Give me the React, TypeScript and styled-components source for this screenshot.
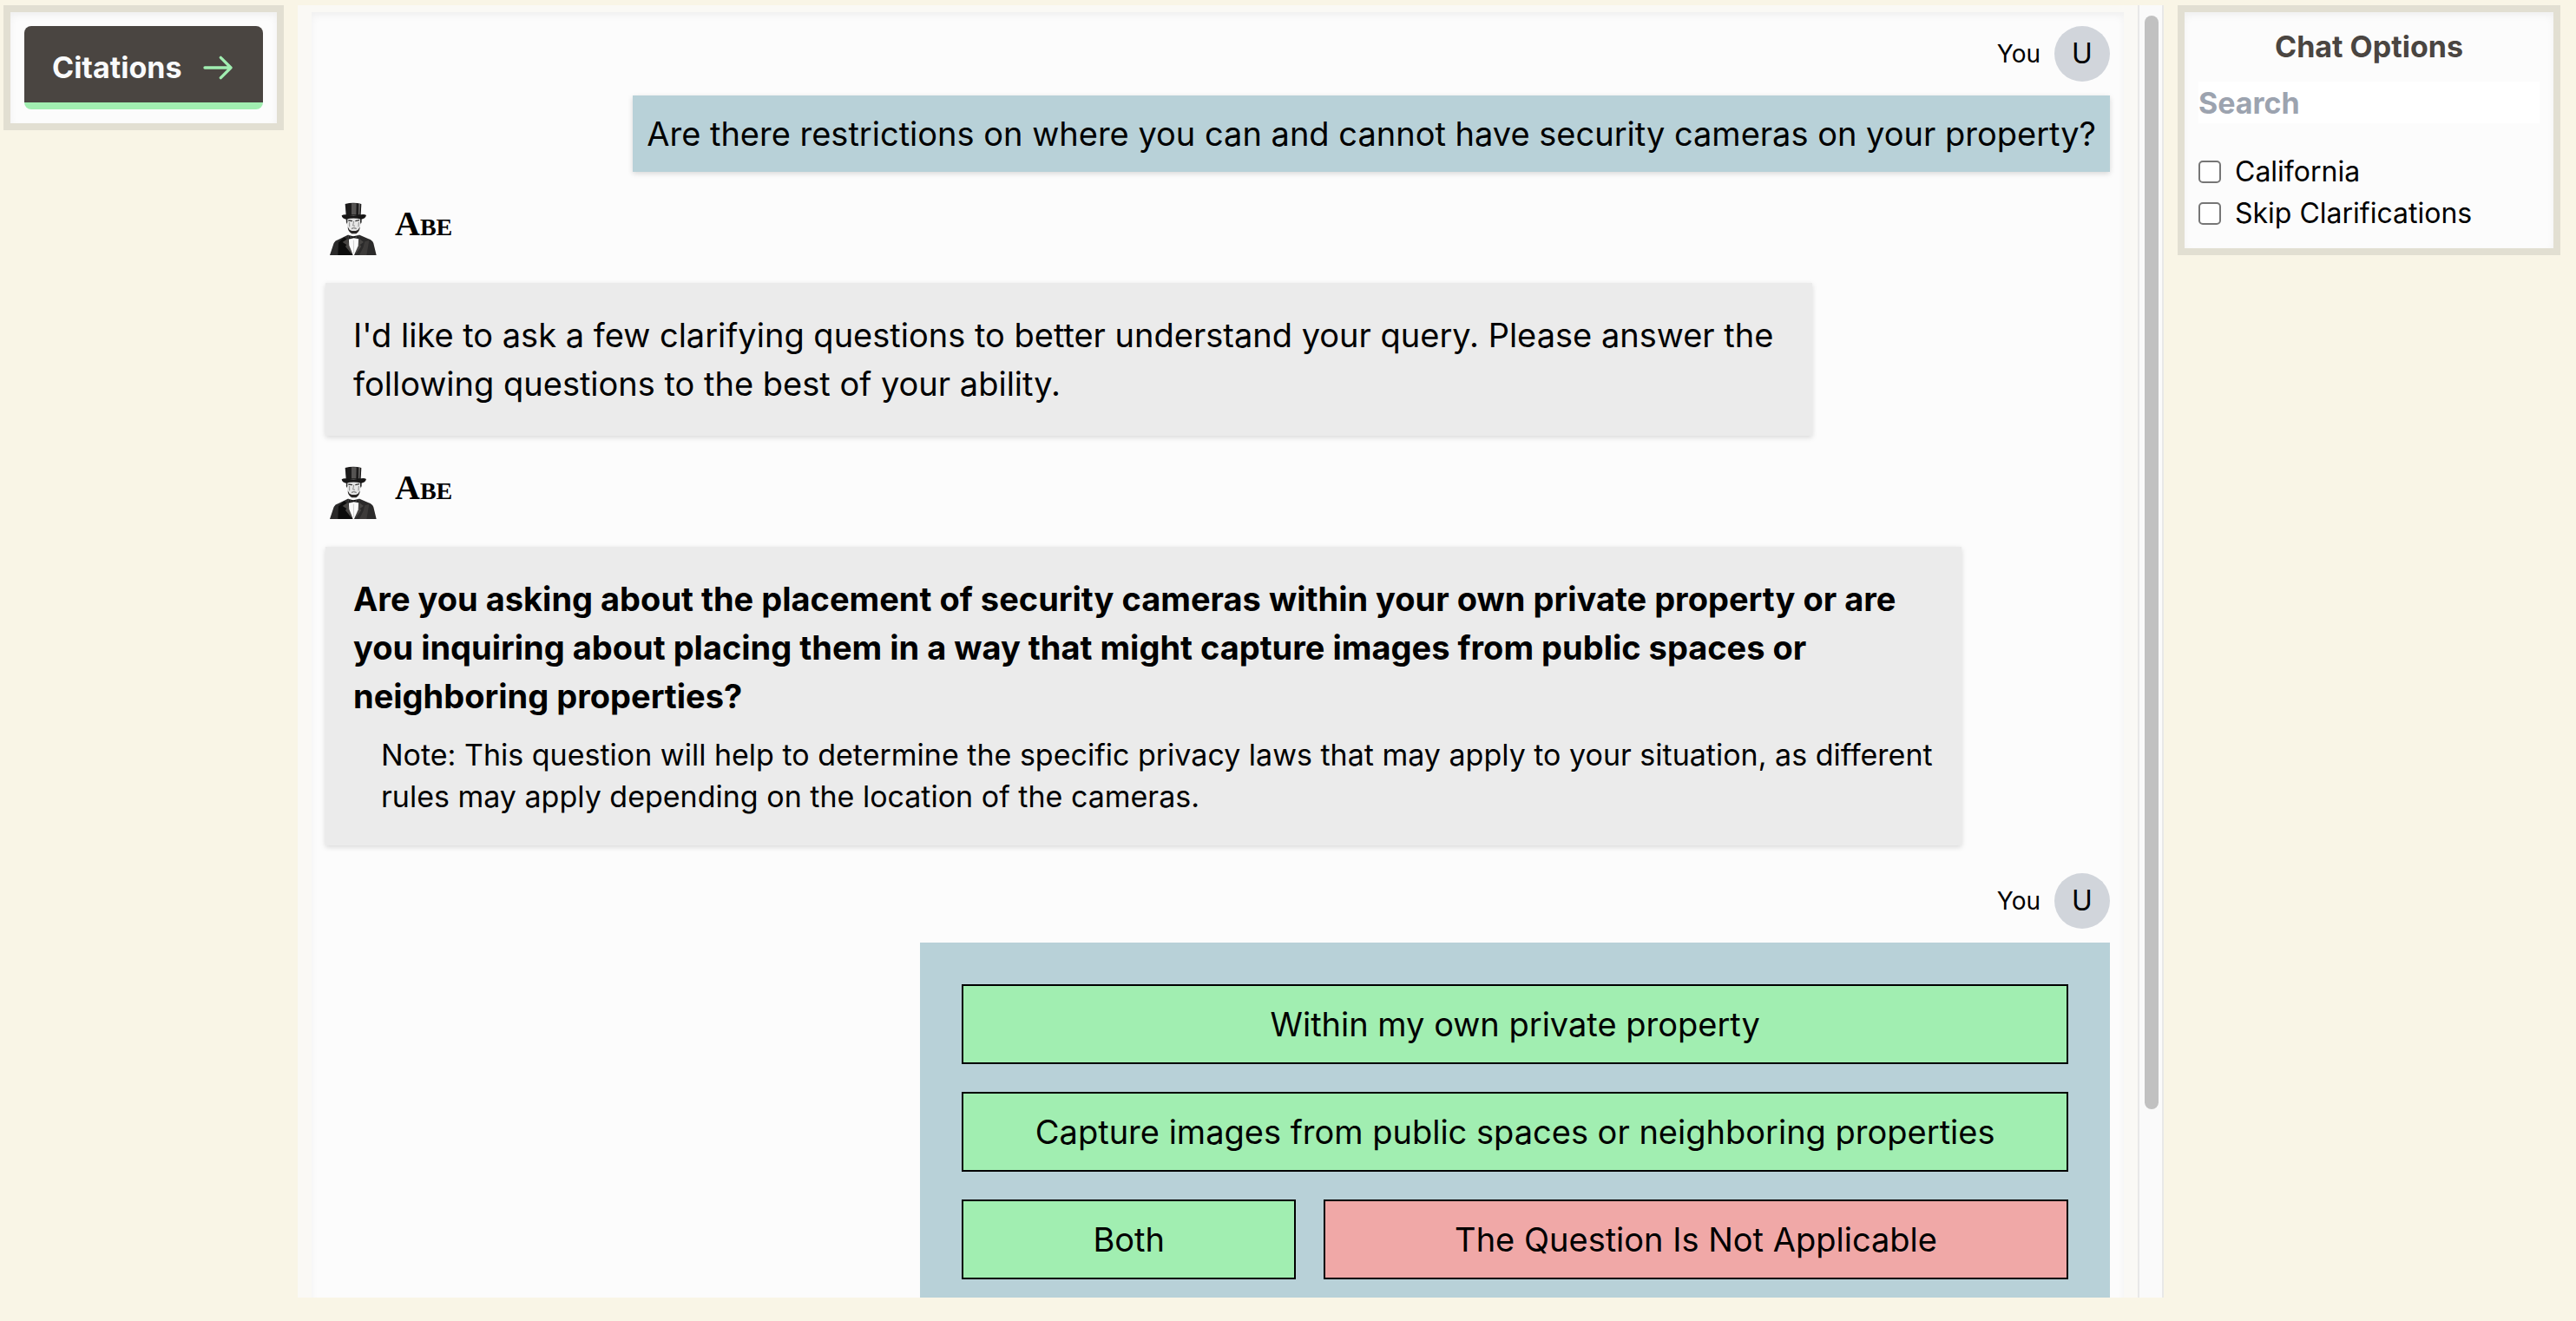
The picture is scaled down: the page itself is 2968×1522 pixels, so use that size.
import React, { useState } from "react";
import styled, { createGlobalStyle } from "styled-components";

const color = {
  page: "#f9f5e6",
  frame: "#e2dfd2",
  surface: "#fcfcfc",
  ink: "#000000",
  charcoal: "#4a4541",
  user: "#b8d1d8",
  bot: "#ebebeb",
  green: "#a1eeb1",
  red: "#f0a8a7",
};

const innerShadow = "inset 0 4px 8px rgba(0, 0, 0, 0.05)";

const GlobalStyle = createGlobalStyle`
  *, *::before, *::after { box-sizing: border-box; }
  body {
    margin: 0;
    background: ${color.page};
    color: ${color.ink};
    font-family: Inter, "Liberation Sans", sans-serif;
  }
  button, input { font: inherit; color: inherit; }
  p, h2 { margin: 0; }
`;

const Page = styled.div`
  display: grid;
  grid-template-columns: 323px minmax(0, 1fr) 441px;
  gap: 16px;
  align-items: start;
  height: 100vh;
  padding: 6px 18px 27px 4px;
`;

const Panel = styled.aside`
  padding: 16px;
  border: 8px solid ${color.frame};
  background: ${color.surface};
  box-shadow: ${innerShadow};
`;

const CitationsButton = styled.button`
  display: flex;
  align-items: center;
  justify-content: space-between;
  width: 100%;
  height: 96px;
  padding: 0 32px;
  border: 0;
  border-radius: 8px;
  background: linear-gradient(to top, ${color.green} 8px, ${color.charcoal} 8px);
  color: #f9fafb;
  font-size: 34px;
  font-weight: 700;
  line-height: 48px;
`;

const ArrowIcon = styled.svg`
  width: 40px;
  height: 40px;
  fill: none;
  stroke: ${color.green};
  stroke-width: 2;
  stroke-linecap: round;
  stroke-linejoin: round;
`;

const ChatFrame = styled.main`
  display: flex;
  height: 100%;
  min-height: 0;
  background: #faf9f5;
`;

const ChatScroll = styled.div`
  flex: 1;
  min-width: 0;
  overflow: hidden;
  padding: 8px 16px 0;
`;

const Thread = styled.div`
  display: flex;
  flex-direction: column;
  gap: 32px;
  padding: 16px;
  background: ${color.surface};
  box-shadow: ${innerShadow};
`;

const ScrollTrack = styled.div`
  width: 30px;
  padding: 12px 4px 12px 6px;
  border: solid #e8e8e8;
  border-width: 0 2px;
  background: #fafafa;
`;

const ScrollThumb = styled.div`
  width: 16px;
  height: 86%;
  border-radius: 8px;
  background: #c1c1c1;
`;

const Message = styled.article<{ $from: "user" | "bot" }>`
  display: flex;
  flex-direction: column;
  align-items: ${(p) => (p.$from === "user" ? "flex-end" : "flex-start")};
  gap: ${(p) => (p.$from === "user" ? "16px" : "32px")};
`;

const Author = styled.header`
  display: flex;
  align-items: center;
  gap: 16px;
  height: 64px;
  font-size: 28px;
  line-height: 40px;
`;

const Avatar = styled.span`
  display: grid;
  place-items: center;
  width: 64px;
  height: 64px;
  border-radius: 50%;
  background: #d1d5db;
  font-size: 32px;
`;

const Portrait = styled.svg`
  width: 64px;
  height: 64px;
`;

const BotName = styled.span`
  padding-bottom: 8px;
  font-family: "Liberation Serif", serif;
  font-size: 40px;
  font-weight: 700;
  font-variant: small-caps;
`;

const Bubble = styled.div<{ $from: "user" | "bot"; $width?: string }>`
  width: ${(p) => p.$width ?? "auto"};
  padding: ${(p) => (p.$from === "user" ? "16px" : "32px")};
  background: ${(p) => (p.$from === "user" ? color.user : color.bot)};
  box-shadow: 0 2px 6px rgba(0, 0, 0, 0.15);
  font-size: 38px;
  line-height: 56px;
`;

const Question = styled.p`
  font-weight: 700;
`;

const Note = styled.p`
  margin-top: 16px;
  padding-left: 32px;
  font-size: 34px;
  line-height: 48px;
`;

const Choices = styled.div`
  display: flex;
  flex-wrap: wrap;
  gap: 32px;
  width: calc(100% * 2 / 3);
  padding: 48px;
  background: ${color.user};
`;

const Choice = styled.button<{ $tone: "green" | "red" }>`
  flex: 1 1 auto;
  padding: 16px 32px;
  border: 2px solid ${color.ink};
  background: ${(p) => color[p.$tone]};
  font-size: 38px;
  line-height: 56px;
`;

const PanelTitle = styled.h2`
  color: ${color.charcoal};
  font-size: 34px;
  font-weight: 700;
  line-height: 48px;
  text-align: center;
`;

const SearchBox = styled.input`
  display: block;
  width: 100%;
  height: 48px;
  margin: 16px 0 32px;
  padding: 0;
  border: 0;
  background: #ffffff;
  font-size: 34px;
  font-weight: 700;
  &::placeholder {
    color: #9ca3af;
  }
`;

const Option = styled.label`
  display: flex;
  align-items: center;
  gap: 16px;
  font-size: 32px;
  line-height: 48px;
`;

const Tick = styled.input`
  appearance: none;
  width: 26px;
  height: 26px;
  margin: 0;
  border: 2px solid #767676;
  border-radius: 5px;
  background: #ffffff;
  &:checked {
    background: ${color.charcoal};
  }
`;

function AbePortrait() {
  return (
    <Portrait viewBox="15 30 192 192" aria-hidden="true">
      <path d="M30 222 L44 180 Q48 171 60 168 L92 152 L133 152 L164 166 Q177 170 181 181 L191 222 Z" fill="#2b2a2a" />
      <path d="M58 222 L60 178 L80 160 L92 170 L108 222 Z" fill="#0c0c0c" />
      <path d="M74 177 L92 165 L106 219 L84 192 L88 186 Z M147 177 L132 165 L118 219 L139 192 L134 186 Z" fill="#484644" />
      <path d="M151 175 L166 171 L157 222 L132 222 L145 196 Z" fill="#3d3b3a" />
      <path d="M98 140 L128 140 L130 158 L128 190 L114 222 L110 222 L97 188 L95 158 Z" fill="#fbfbfb" />
      <path d="M112 170 L113 216" stroke="#bdbdbd" strokeWidth="2" />
      <path d="M95 153 L111 157 L130 153 L131 166 L113 163 L94 167 Z" fill="#151515" />
      <path d="M99 159 L106 160 M118 160 L126 159" stroke="#777" strokeWidth="2" />
      <path d="M89 94 L137 94 Q142 109 135 122 Q132 138 119 146 L107 146 Q93 138 91 123 Q85 108 89 94 Z" fill="#e6e6e6" />
      <path d="M87 95 L91 96 L91 108 L89 114 Q85 108 87 95 Z M139 95 L135 96 L135 108 L137 114 Q142 108 139 95 Z" fill="#2b2b2b" />
      <path d="M92 124 L98 134 L106 138 L120 138 L128 134 L134 124 Q134 140 121 148 L106 148 Q92 140 92 124 Z" fill="#292625" />
      <path d="M105 130 L113 128 L122 130" fill="none" stroke="#5a5a5a" strokeWidth="3" />
      <path d="M94 102 L108 104 M118 104 L132 101" stroke="#333" strokeWidth="4" />
      <path d="M113 104 L110 120 L117 121 M98 108 L98 124 M130 108 L129 124" fill="none" stroke="#8a8a8a" strokeWidth="3" />
      <path d="M83 45 Q111 38 139 45 L137 84 L86 84 Z" fill="#1c1b1b" />
      <path d="M105 43 L122 43 L121 82 L105 82 Z" fill="#555352" />
      <path d="M130 44 L135 45 L133 82 L129 82 Z" fill="#6d6b6a" />
      <path d="M71 85 Q77 81 85 82 Q112 88 138 82 Q150 80 156 84 Q153 96 139 98 Q112 91 86 98 Q73 96 71 85 Z" fill="#171616" />
    </Portrait>
  );
}

function UserHeader() {
  return (
    <Author>
      You <Avatar>U</Avatar>
    </Author>
  );
}

function AbeHeader() {
  return (
    <Author>
      <AbePortrait />
      <BotName>Abe</BotName>
    </Author>
  );
}

const filters = ["California", "Skip Clarifications"];

export default function App() {
  const [query, setQuery] = useState("");

  return (
    <>
      <GlobalStyle />
      <Page>
        <Panel>
          <CitationsButton type="button">
            Citations
            <ArrowIcon viewBox="0 0 24 24" aria-hidden="true">
              <path d="M14 5l7 7m0 0l-7 7m7-7H3" />
            </ArrowIcon>
          </CitationsButton>
        </Panel>

        <ChatFrame>
          <ChatScroll>
            <Thread>
              <Message $from="user">
                <UserHeader />
                <Bubble $from="user">
                  Are there restrictions on where you can and cannot have security cameras on your property?
                </Bubble>
              </Message>

              <Message $from="bot">
                <AbeHeader />
                <Bubble $from="bot" $width="calc(100% * 5 / 6)">
                  I'd like to ask a few clarifying questions to better understand your query. Please answer the
                  following questions to the best of your ability.
                </Bubble>
              </Message>

              <Message $from="bot">
                <AbeHeader />
                <Bubble $from="bot" $width="calc(100% * 11 / 12)">
                  <Question>
                    Are you asking about the placement of security cameras within your own private property or are you
                    inquiring about placing them in a way that might capture images from public spaces or neighboring
                    properties?
                  </Question>
                  <Note>
                    Note: This question will help to determine the specific privacy laws that may apply to your
                    situation, as different rules may apply depending on the location of the cameras.
                  </Note>
                </Bubble>
              </Message>

              <Message $from="user">
                <UserHeader />
                <Choices>
                  <Choice type="button" $tone="green">Within my own private property</Choice>
                  <Choice type="button" $tone="green">
                    Capture images from public spaces or neighboring properties
                  </Choice>
                  <Choice type="button" $tone="green">Both</Choice>
                  <Choice type="button" $tone="red">The Question Is Not Applicable</Choice>
                </Choices>
              </Message>
            </Thread>
          </ChatScroll>
          <ScrollTrack>
            <ScrollThumb />
          </ScrollTrack>
        </ChatFrame>

        <Panel>
          <PanelTitle>Chat Options</PanelTitle>
          <SearchBox
            type="search"
            placeholder="Search"
            aria-label="Search"
            value={query}
            onChange={(e) => setQuery(e.target.value)}
          />
          {filters.map((name) => (
            <Option key={name}>
              <Tick type="checkbox" />
              {name}
            </Option>
          ))}
        </Panel>
      </Page>
    </>
  );
}
